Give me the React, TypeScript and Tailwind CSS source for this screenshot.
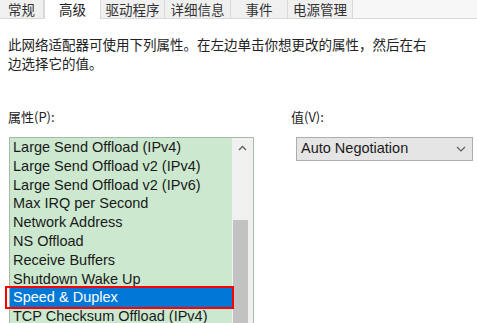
import React from "react";

const tabs = [
  { label: "常规", w: "w-[44px]" },
  { label: "高级", w: "w-[57px]", active: true },
  { label: "驱动程序", w: "w-[64px]" },
  { label: "详细信息", w: "w-[66px]" },
  { label: "事件", w: "w-[57px]" },
  { label: "电源管理", w: "w-[65px]" },
];

const properties = [
  "Large Send Offload (IPv4)",
  "Large Send Offload v2 (IPv4)",
  "Large Send Offload v2 (IPv6)",
  "Max IRQ per Second",
  "Network Address",
  "NS Offload",
  "Receive Buffers",
  "Shutdown Wake Up",
  "Speed & Duplex",
  "TCP Checksum Offload (IPv4)",
];

const cjk = "font-['Microsoft_YaHei','Noto_Sans_CJK_SC',sans-serif]";
const latin = "font-['Segoe_UI','Liberation_Sans','Noto_Sans_CJK_SC',sans-serif]";

export default function App() {
  return (
    <div className={`w-[477px] h-[323px] overflow-hidden bg-white text-[#1a1a1a] ${cjk}`}>
      {/* Tabs */}
      <div className="flex h-[19px] bg-[#f7f7f7]">
        {tabs.map((t) => (
          <div
            key={t.label}
            className={`${t.w} flex justify-center pt-[2px] text-[13.5px] leading-[15px] ${
              t.active
                ? "bg-white h-[19px] border-x border-[#d9d9d9]"
                : "bg-[#f0f0f0] border-r border-b border-[#d9d9d9] text-[#333]"
            }`}
          >
            {t.label}
          </div>
        ))}
        <div className="flex-1 border-b border-[#d9d9d9]" />
      </div>

      {/* Description */}
      <p className="mt-[16px] ml-[8px] text-[13.5px] leading-[19px] text-[#222]">
        此网络适配器可使用下列属性。在左边单击你想更改的属性，然后在右
        <br />
        边选择它的值。
      </p>

      {/* Labels + controls */}
      <div className="mt-[35px] flex">
        <div className="w-[283px] pl-[8px]">
          <div className="text-[13px] leading-[18px] text-[#222]">属性(P):</div>
          <div className="relative mt-[11px] ml-[1px] w-[245px] h-[200px] border border-[#a8b8a8] bg-[#cce8cf] flex">
            <div className={`flex-1 ${latin} text-[14.5px]`}>
              {properties.map((p, i) => (
                <div
                  key={p}
                  className={`h-[18.8px] leading-[18.8px] pl-[3px] whitespace-nowrap ${
                    i === 8 ? "bg-[#0078d7] text-white" : "text-[#1a1a1a]"
                  }`}
                >
                  {p}
                </div>
              ))}
            </div>
            {/* Scrollbar */}
            <div className="w-[21px] bg-[#f0f0f0] flex flex-col items-center">
              <svg width="9" height="6" viewBox="0 0 9 6" className="mt-[7px]">
                <path d="M1 5 L4.5 1.5 L8 5" fill="none" stroke="#606060" strokeWidth="1.4" />
              </svg>
              <div className="mt-[69px] w-[15px] flex-1 bg-[#c2c2c2] self-start ml-[1px]" />
            </div>
            {/* Red highlight annotation */}
            <div className="absolute left-[-5px] top-[148px] w-[229px] h-[23px] border-[2.5px] border-[#ff0000]" />
          </div>
        </div>
        <div className="flex-1">
          <div className="pl-[8px] text-[13px] leading-[18px] text-[#222]">值(V):</div>
          <div className="mt-[11px] ml-[13px] w-[177px] h-[24px] border border-[#adadad] bg-[#e5e5e5] flex items-center justify-between pl-[4px] pr-[6px]">
            <span className={`${latin} text-[14.5px] text-[#1a1a1a]`}>Auto Negotiation</span>
            <svg width="10" height="6" viewBox="0 0 10 6">
              <path d="M1 1 L5 5 L9 1" fill="none" stroke="#606060" strokeWidth="1.2" />
            </svg>
          </div>
        </div>
      </div>
    </div>
  );
}
